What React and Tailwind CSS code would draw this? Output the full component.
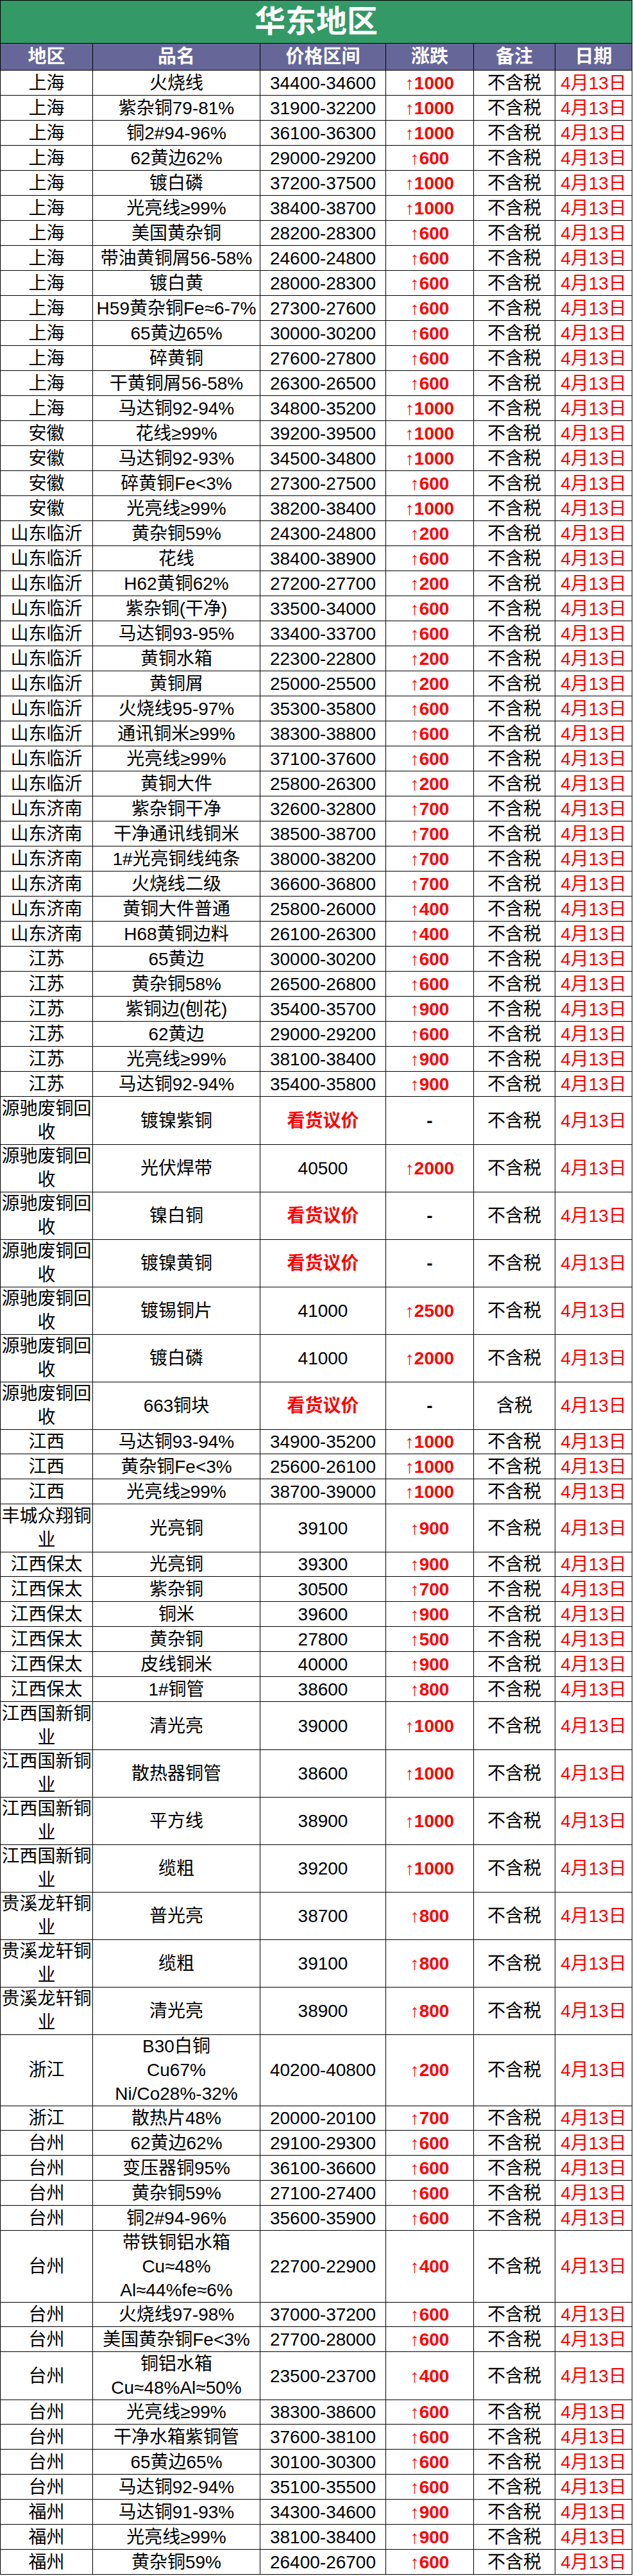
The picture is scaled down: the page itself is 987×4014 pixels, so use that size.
import React from 'react'

const YC = '源驰废铜回\n收'
const GX = '江西国新铜\n业'
const LX = '贵溪龙轩铜\n业'

// [地区, 品名, 价格区间, 涨跌, 备注]
const rows = [
  ['上海', '火烧线', '34400-34600', '1000'],
  ['上海', '紫杂铜79-81%', '31900-32200', '1000'],
  ['上海', '铜2#94-96%', '36100-36300', '1000'],
  ['上海', '62黄边62%', '29000-29200', '600'],
  ['上海', '镀白磷', '37200-37500', '1000'],
  ['上海', '光亮线≥99%', '38400-38700', '1000'],
  ['上海', '美国黄杂铜', '28200-28300', '600'],
  ['上海', '带油黄铜屑56-58%', '24600-24800', '600'],
  ['上海', '镀白黄', '28000-28300', '600'],
  ['上海', 'H59黄杂铜Fe≈6-7%', '27300-27600', '600'],
  ['上海', '65黄边65%', '30000-30200', '600'],
  ['上海', '碎黄铜', '27600-27800', '600'],
  ['上海', '干黄铜屑56-58%', '26300-26500', '600'],
  ['上海', '马达铜92-94%', '34800-35200', '1000'],
  ['安徽', '花线≥99%', '39200-39500', '1000'],
  ['安徽', '马达铜92-93%', '34500-34800', '1000'],
  ['安徽', '碎黄铜Fe<3%', '27300-27500', '600'],
  ['安徽', '光亮线≥99%', '38200-38400', '1000'],
  ['山东临沂', '黄杂铜59%', '24300-24800', '200'],
  ['山东临沂', '花线', '38400-38900', '600'],
  ['山东临沂', 'H62黄铜62%', '27200-27700', '200'],
  ['山东临沂', '紫杂铜(干净)', '33500-34000', '600'],
  ['山东临沂', '马达铜93-95%', '33400-33700', '600'],
  ['山东临沂', '黄铜水箱', '22300-22800', '200'],
  ['山东临沂', '黄铜屑', '25000-25500', '200'],
  ['山东临沂', '火烧线95-97%', '35300-35800', '600'],
  ['山东临沂', '通讯铜米≥99%', '38300-38800', '600'],
  ['山东临沂', '光亮线≥99%', '37100-37600', '600'],
  ['山东临沂', '黄铜大件', '25800-26300', '200'],
  ['山东济南', '紫杂铜干净', '32600-32800', '700'],
  ['山东济南', '干净通讯线铜米', '38500-38700', '700'],
  ['山东济南', '1#光亮铜线纯条', '38000-38200', '700'],
  ['山东济南', '火烧线二级', '36600-36800', '700'],
  ['山东济南', '黄铜大件普通', '25800-26000', '400'],
  ['山东济南', 'H68黄铜边料', '26100-26300', '400'],
  ['江苏', '65黄边', '30000-30200', '600'],
  ['江苏', '黄杂铜58%', '26500-26800', '600'],
  ['江苏', '紫铜边(刨花)', '35400-35700', '900'],
  ['江苏', '62黄边', '29000-29200', '600'],
  ['江苏', '光亮线≥99%', '38100-38400', '900'],
  ['江苏', '马达铜92-94%', '35400-35800', '900'],
  [YC, '镀镍紫铜', '看货议价', '-'],
  [YC, '光伏焊带', '40500', '2000'],
  [YC, '镍白铜', '看货议价', '-'],
  [YC, '镀镍黄铜', '看货议价', '-'],
  [YC, '镀锡铜片', '41000', '2500'],
  [YC, '镀白磷', '41000', '2000'],
  [YC, '663铜块', '看货议价', '-', '含税'],
  ['江西', '马达铜93-94%', '34900-35200', '1000'],
  ['江西', '黄杂铜Fe<3%', '25600-26100', '1000'],
  ['江西', '光亮线≥99%', '38700-39000', '1000'],
  ['丰城众翔铜\n业', '光亮铜', '39100', '900'],
  ['江西保太', '光亮铜', '39300', '900'],
  ['江西保太', '紫杂铜', '30500', '700'],
  ['江西保太', '铜米', '39600', '900'],
  ['江西保太', '黄杂铜', '27800', '500'],
  ['江西保太', '皮线铜米', '40000', '900'],
  ['江西保太', '1#铜管', '38600', '800'],
  [GX, '清光亮', '39000', '1000'],
  [GX, '散热器铜管', '38600', '1000'],
  [GX, '平方线', '38900', '1000'],
  [GX, '缆粗', '39200', '1000'],
  [LX, '普光亮', '38700', '800'],
  [LX, '缆粗', '39100', '800'],
  [LX, '清光亮', '38900', '800'],
  ['浙江', 'B30白铜\nCu67%\nNi/Co28%-32%', '40200-40800', '200'],
  ['浙江', '散热片48%', '20000-20100', '700'],
  ['台州', '62黄边62%', '29100-29300', '600'],
  ['台州', '变压器铜95%', '36100-36600', '600'],
  ['台州', '黄杂铜59%', '27100-27400', '600'],
  ['台州', '铜2#94-96%', '35600-35900', '600'],
  ['台州', '带铁铜铝水箱\nCu≈48%\nAl≈44%fe≈6%', '22700-22900', '400'],
  ['台州', '火烧线97-98%', '37000-37200', '600'],
  ['台州', '美国黄杂铜Fe<3%', '27700-28000', '600'],
  ['台州', '铜铝水箱\nCu≈48%Al≈50%', '23500-23700', '400'],
  ['台州', '光亮线≥99%', '38300-38600', '600'],
  ['台州', '干净水箱紫铜管', '37600-38100', '600'],
  ['台州', '65黄边65%', '30100-30300', '600'],
  ['台州', '马达铜92-94%', '35100-35500', '600'],
  ['福州', '马达铜91-93%', '34300-34600', '900'],
  ['福州', '光亮线≥99%', '38100-38400', '900'],
  ['福州', '黄杂铜59%', '26400-26700', '600'],
]

const rowHeight = { 1: 'h-[39px]', 2: 'h-[74px]', 3: 'h-[111px]' }

const cols = 'grid grid-cols-[144px_261px_196px_137px_127px_120px]'
const cell = 'flex items-center justify-center text-center whitespace-pre-line leading-[37px] border-r border-b border-black overflow-visible'

function lines(s) {
  return s.split('\n').length
}

export default function App() {
  return (
    <div className="w-[987px] bg-white font-['Liberation_Sans','Noto_Sans_CJK_SC',sans-serif] text-black">
      <div className="w-[986px] border-t border-l border-black">
        <div className="flex h-[67px] items-center justify-center border-r border-b border-black bg-[#339966] text-[48px] font-bold leading-none text-white">
          华东地区
        </div>

        <div className={`${cols} h-[42px] bg-[#666699] text-[29px] font-bold text-white`}>
          {['地区', '品名', '价格区间', '涨跌', '备注', '日期'].map((h) => (
            <div key={h} className={cell}>
              {h}
            </div>
          ))}
        </div>

        {rows.map(([region, name, price, change, tax = '不含税'], i) => {
          const n = Math.max(lines(region), lines(name))
          const negotiable = price === '看货议价'
          return (
            <div key={i} className={`${cols} ${rowHeight[n]} text-[28px]`}>
              <div className={cell}>{region}</div>
              <div className={`${cell} whitespace-pre`}>{name}</div>
              <div className={`${cell} ${negotiable ? 'font-bold text-[#ff0000]' : ''}`}>{price}</div>
              <div className={`${cell} font-bold text-[#ff0000]`}>
                {change === '-' ? <span className="text-black">-</span> : `↑${change}`}
              </div>
              <div className={cell}>{tax}</div>
              <div className={`${cell} text-[#ff0000]`}>4月13日</div>
            </div>
          )
        })}
      </div>
    </div>
  )
}
